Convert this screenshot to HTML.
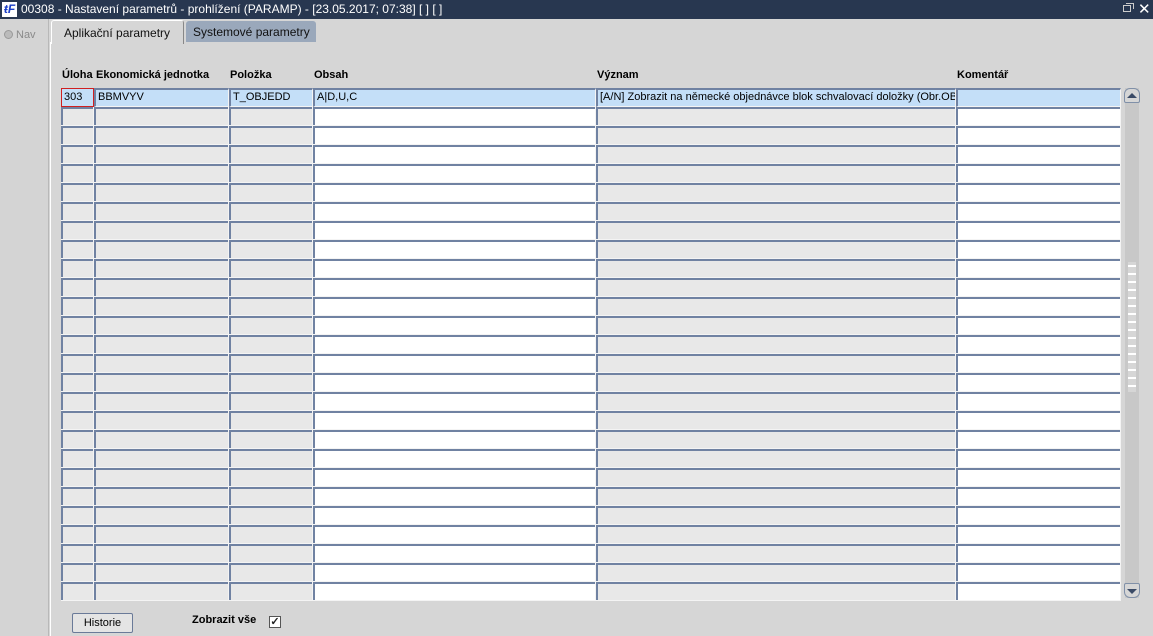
<!DOCTYPE html>
<html><head><meta charset="utf-8"><style>
*{margin:0;padding:0;box-sizing:border-box}
body{width:1153px;height:636px;background:#d6d6d6;font-family:"Liberation Sans",Arial,sans-serif;font-size:11px;color:#000;position:relative;overflow:hidden}
.a{position:absolute}
.title{left:0;top:0;width:1153px;height:19px;background:#283750;color:#fff;font-size:12px;line-height:19px}
.hdr{font-weight:bold;font-size:11px;top:69px}
.cell{position:absolute;height:19px;border-top:2px solid #7082a2;border-left:2px solid #7082a2;border-right:1px solid #f4f4f4;border-bottom:1px solid #f4f4f4;line-height:15px;padding-left:2px;white-space:nowrap;overflow:hidden;background:#c4dff8}
.col{position:absolute;top:107px;height:494px;background:repeating-linear-gradient(#7082a2 0 2px,var(--f) 2px 18px,#f4f4f4 18px 19px);}
.col::before{content:"";position:absolute;left:0;top:0;bottom:0;width:2px;background:repeating-linear-gradient(#7082a2 0 18px,#f4f4f4 18px 19px)}
.col::after{content:"";position:absolute;right:0;top:0;bottom:0;width:1px;background:#f4f4f4}
</style></head><body>
<div class="a title">
 <div class="a" style="left:2px;top:2px;width:15px;height:15px;background:#fff;color:#1a3ec8;font:italic bold 12px/15px 'Liberation Sans';text-align:center">ŧF</div>
 <div class="a" style="left:21px;top:0">00308 - Nastavení parametrů - prohlížení (PARAMP) - [23.05.2017; 07:38] [ ] [ ]</div>
 <div class="a" style="left:1123px;top:5px;width:8px;height:7px;border:1px solid #ccc"></div>
 <div class="a" style="left:1126px;top:3px;width:8px;height:6px;border:1px solid #ccc;border-bottom:none;border-left:none"></div>
 <div class="a" style="left:1138px;top:0;font-size:15px">✕</div>
</div>
<div class="a" style="left:0;top:19px;width:49px;height:617px;background:#d4d4d4;border-right:1px solid #b8b8b8"></div>
<div class="a" style="left:4px;top:30px;width:9px;height:9px;border-radius:50%;background:#bbb;border:1px solid #999"></div>
<div class="a" style="left:16px;top:29px;color:#8a8a8a">Nav</div>
<div class="a" style="left:50px;top:42px;width:1103px;height:594px;border-left:1px solid #fff;background:#d6d6d6"></div>
<div class="a" style="left:186px;top:21px;width:130px;height:21px;background:#9aa8bb;border-radius:3px 3px 0 0;font-size:12px;line-height:22px;padding-left:7px;color:#111">Systemové parametry</div>
<div class="a" style="left:51px;top:20px;width:133px;height:24px;background:#d6d6d6;border:1px solid #fff;border-bottom:none;border-right:1px solid #888;border-radius:3px 3px 0 0;font-size:12px;line-height:24px;padding-left:12px;color:#111">Aplikační parametry</div>

<div class="a hdr" style="left:62px">Úloha</div>
<div class="a hdr" style="left:96px">Ekonomická jednotka</div>
<div class="a hdr" style="left:230px">Položka</div>
<div class="a hdr" style="left:314px">Obsah</div>
<div class="a hdr" style="left:597px">Význam</div>
<div class="a hdr" style="left:957px">Komentář</div>

<div class="cell" style="left:61px;top:88px;width:33px;border:1px solid #d02020;line-height:17px">303</div>
<div class="cell" style="left:94px;top:88px;width:135px">BBMVYV</div>
<div class="cell" style="left:229px;top:88px;width:84px">T_OBJEDD</div>
<div class="cell" style="left:313px;top:88px;width:283px">A|D,U,C</div>
<div class="cell" style="left:596px;top:88px;width:360px">[A/N] Zobrazit na německé objednávce blok schvalovací doložky (Obr.OB.</div>
<div class="cell" style="left:956px;top:88px;width:165px"></div>

<div class="col" style="left:61px;width:33px;--f:#e8e8e8"></div>
<div class="col" style="left:94px;width:135px;--f:#e8e8e8"></div>
<div class="col" style="left:229px;width:84px;--f:#e8e8e8"></div>
<div class="col" style="left:313px;width:283px;--f:#fff"></div>
<div class="col" style="left:596px;width:360px;--f:#e8e8e8"></div>
<div class="col" style="left:956px;width:165px;--f:#fff"></div>

<div class="a" style="left:1125px;top:88px;width:14px;height:510px;background:#c8c8c8"></div>
<div class="a" style="left:1124px;top:88px;width:16px;height:15px;background:#d6d6d6;border:1px solid #8090a8;border-radius:6px 6px 2px 2px"></div>
<div class="a" style="left:1127px;top:93px;width:0;height:0;border-left:5px solid transparent;border-right:5px solid transparent;border-bottom:5px solid #3a4a66"></div>
<div class="a" style="left:1124px;top:583px;width:16px;height:15px;background:#d6d6d6;border:1px solid #8090a8;border-radius:2px 2px 6px 6px"></div>
<div class="a" style="left:1127px;top:589px;width:0;height:0;border-left:5px solid transparent;border-right:5px solid transparent;border-top:5px solid #3a4a66"></div>
<div class="a" style="left:1128px;top:262px;width:8px;height:130px;background:repeating-linear-gradient(#d6d6d6 0 3px,#fff 3px 5px,#d6d6d6 5px 8px)"></div>

<div class="a" style="left:72px;top:613px;width:61px;height:20px;border:1px solid #6a7a98;border-radius:2px;background:#e4e4e4;text-align:center;line-height:18px">Historie</div>
<div class="a" style="left:192px;top:614px;font-weight:bold">Zobrazit vše</div>
<div class="a" style="left:269px;top:616px;width:12px;height:12px;border:1px solid #555;background:#fff;font-size:11px;line-height:10px;text-align:center;font-weight:bold;color:#222">✓</div>
</body></html>
